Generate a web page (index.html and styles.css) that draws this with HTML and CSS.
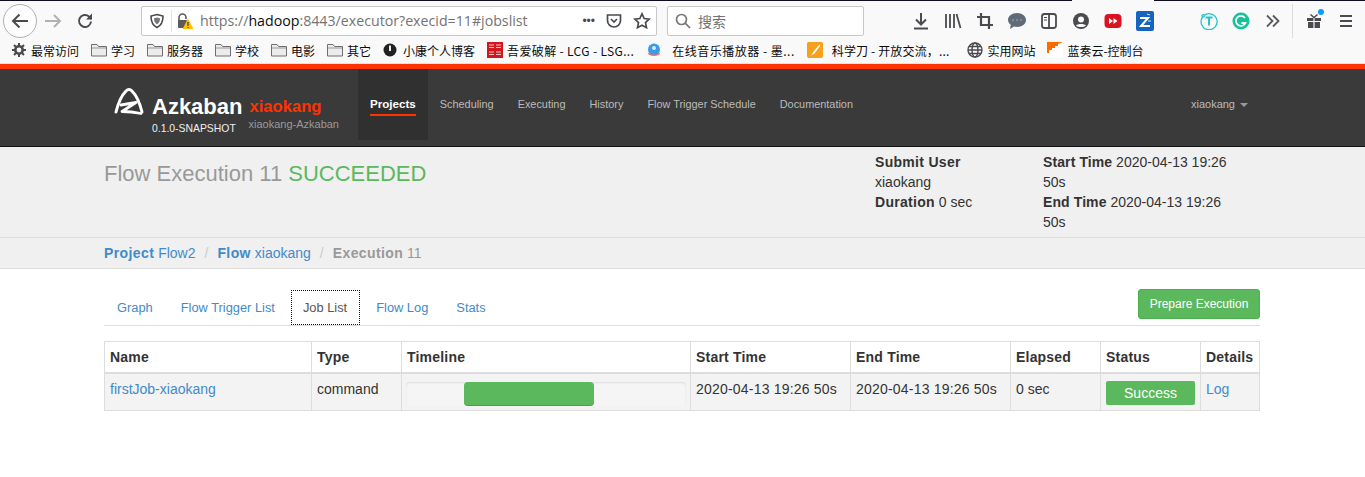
FILE: index.html
```html
<!DOCTYPE html>
<html lang="en">
<head>
    <meta charset="UTF-8">
    <meta name="viewport" content="width=device-width, initial-scale=1.0">
    <title>Azkaban Flow Execution</title>
    <link rel="stylesheet" href="styles.css">
</head>
<body>
    <svg class="sprite" xmlns="http://www.w3.org/2000/svg">
        <symbol id="folder" viewBox="0 0 16 16">
            <path d="M.5 14V2.500h5.500l1.500 2H15.500V14z" fill="#ececec" stroke="#6f6f73"/>
            <path d="M1 6h14" stroke="#98989b"/>
        </symbol>
    </svg>

    <!-- browser chrome -->
    <div class="tabstrip"><span class="strip-dark"></span><span class="strip-gap"></span><span class="strip-end"></span></div>
    <div class="toolbar">
        <button class="back-btn" type="button">
            <svg width="20" height="20" viewBox="0 0 20 20" fill="none" stroke="#4a4a4f" stroke-width="2"><path d="M18 10H3M9.500 3.500L3 10l6.500 6.500"/></svg>
        </button>
        <span class="tool">
            <svg width="18" height="18" viewBox="0 0 18 18" fill="none" stroke="#b1b1b3" stroke-width="2"><path d="M1 9h15M10 3l6 6-6 6"/></svg>
        </span>
        <span class="tool">
            <svg width="18" height="18" viewBox="0 0 18 18" fill="none" stroke="#4a4a4f" stroke-width="2"><path d="M15 9.500A6 6 0 1 1 13 4.500L15.500 7"/><path d="M16 1.500V7.500H10" fill="#4a4a4f" stroke="none"/></svg>
        </span>
        <div class="urlbar">
            <svg class="url-shield" width="16" height="16" viewBox="0 0 16 16"><path d="M8 1.500l6 1.500c0 6-1.500 9.500-6 11.500C3.500 12.500 2 9 2 3z" fill="none" stroke="#4a4a4f" stroke-width="1.600"/><path d="M8 4.500l3 .8c0 3-.8 4.800-3 6-2.200-1.200-3-3-3-6z" fill="#77777b"/></svg>
            <span class="url-sep"></span>
            <svg class="url-lock" width="18" height="18" viewBox="0 0 18 18"><path d="M3 9V5.500a3.500 3.500 0 0 1 7 0V7" fill="none" stroke="#5a5a5e" stroke-width="1.600"/><rect x="2" y="8" width="9" height="8" rx="1" fill="#5a5a5e"/><path d="M12 6.500l5.500 10.500h-11z" fill="#ffbf00"/><path d="M12 10v4M12 15v1" stroke="#3a3a3a" stroke-width="1.200"/></svg>
            <span class="url-text">https://<b>hadoop</b>:8443/executor?execid=11#jobslist</span>
            <span class="url-dots">•••</span>
            <svg width="18" height="18" viewBox="0 0 18 18" fill="none" stroke="#4a4a4f" stroke-width="1.700"><path d="M2.500 3h13v5.500a6.500 6.500 0 0 1-13 0z"/><path d="M6 7l3 3 3-3"/></svg>
            <svg class="url-star" width="18" height="18" viewBox="0 0 18 18" fill="none" stroke="#4a4a4f" stroke-width="1.700"><path d="M9 1.800l2.200 4.700 5 .6-3.700 3.500 1 5.100L9 13.200l-4.500 2.500 1-5.100L1.800 7.100l5-.6z"/></svg>
        </div>
        <div class="searchbar">
            <svg width="16" height="16" viewBox="0 0 16 16" fill="none" stroke="#77777b" stroke-width="1.700"><circle cx="6.500" cy="6.500" r="5"/><path d="M10.200 10.200L15 15"/></svg>
            <span>搜索</span>
        </div>
        <div class="tools">
            <span class="tool"><svg width="18" height="18" viewBox="0 0 18 18" fill="none" stroke="#4a4a4f" stroke-width="2"><path d="M9 1v11M4 7.500l5 5 5-5M2 16.500h14"/></svg></span>
            <span class="tool"><svg width="18" height="18" viewBox="0 0 18 18" fill="none" stroke="#4a4a4f" stroke-width="1.800"><path d="M2 2v14M6 2v14M10 2v14M12.500 2l4 14"/></svg></span>
            <span class="tool"><svg width="16" height="16" viewBox="0 0 16 16" fill="none" stroke="#4a4a4f" stroke-width="2.200"><path d="M4 0v12h12M0 4h12v12"/></svg></span>
            <span class="tool"><svg width="20" height="18" viewBox="0 0 20 18"><path d="M10 1c5 0 9 3 9 7s-4 7-9 7c-1 0-2 0-3-.4L3 17l.8-4.300C2 11.500 1 9.900 1 8c0-4 4-7 9-7z" fill="#5f6b78"/><circle cx="6" cy="8" r="1.200" fill="#7f8a96"/><circle cx="10" cy="8" r="1.200" fill="#7f8a96"/><circle cx="14" cy="8" r="1.200" fill="#7f8a96"/></svg></span>
            <span class="tool"><svg width="18" height="18" viewBox="0 0 18 18" fill="none" stroke="#4a4a4f"><rect x="2" y="2" width="14" height="14" rx="2.500" stroke-width="1.800"/><path d="M9 2v14" stroke-width="1.800"/><path d="M4 5.500h3M4 8h3" stroke-width="1.200"/></svg></span>
            <span class="tool"><svg width="18" height="18" viewBox="0 0 18 18"><circle cx="9" cy="9" r="8" fill="#4a4a4f"/><circle cx="9" cy="7.500" r="3" fill="#f9f9fa"/><path d="M4 13.500c1.500-2 8.500-2 10 0-2 2-8 2-10 0z" fill="#f9f9fa"/></svg></span>
            <span class="tool"><svg width="18" height="16" viewBox="0 0 18 16"><rect x="0.500" y="1" width="17" height="14" rx="4" fill="#d9131f"/><path d="M5 5l4 3-4 3zM9.500 5l4 3-4 3z" fill="#fff"/></svg></span>
            <span class="tool"><svg width="18" height="20" viewBox="0 0 18 20"><rect width="18" height="20" rx="2" fill="#1565c0"/><path d="M4 7h8l-7 8h9" fill="none" stroke="#fff" stroke-width="2"/><path d="M11 3l3 1M12 10h3" stroke="#cfe3fa"/></svg></span>
            <span class="tool-space"></span>
            <span class="tool"><svg width="18" height="18" viewBox="0 0 18 18" fill="none" stroke="#27c4cf" stroke-width="1.300"><path d="M4 3.500A8 8 0 1 1 2.600 5"/><circle cx="3.200" cy="3.800" r="1.200"/><path d="M5.500 5.500h7M9 5.500v8" stroke-width="2"/></svg></span>
            <span class="tool"><svg width="18" height="18" viewBox="0 0 18 18"><circle cx="9" cy="9" r="8.500" fill="#15c39a"/><path d="M13 6a5 5 0 1 0 .5 5H9.500" fill="none" stroke="#fff" stroke-width="1.800"/></svg></span>
            <span class="tool"><svg width="16" height="16" viewBox="0 0 16 16" fill="none" stroke="#5a5a5e" stroke-width="1.800"><path d="M2 2.500L7.500 8 2 13.500M8 2.500L13.500 8 8 13.500"/></svg></span>
            <span class="tool-sep"></span>
            <span class="tool gift"><svg width="16" height="16" viewBox="0 0 16 16"><path d="M1 5h6.400v3H1zM8.600 5H15v3H8.600zM2 9h5.400v6H2zM8.600 9H14v6H8.600z" fill="#4a4a4f"/><path d="M4.500 1.500L8 4.500l3.500-3" fill="none" stroke="#4a4a4f" stroke-width="1.500"/></svg><i class="gift-dot"></i></span>
            <span class="tool"><svg width="14" height="14" viewBox="0 0 14 14" stroke="#4a4a4f" stroke-width="2"><path d="M1 2h12M1 7h12M1 12h12"/></svg></span>
        </div>
    </div>
    <div class="bookmarks">
        <span class="bm"><svg width="16" height="16" viewBox="0 0 16 16"><circle cx="8" cy="8" r="3.800" fill="none" stroke="#4a4a4f" stroke-width="2.400"/><path d="M8 1v14M1 8h14M3 3l10 10M13 3L3 13" stroke="#4a4a4f" stroke-width="2"/><circle cx="8" cy="8" r="2.400" fill="#f9f9fa"/></svg>最常访问</span>
        <span class="bm"><svg width="16" height="16"><use href="#folder"/></svg>学习</span>
        <span class="bm"><svg width="16" height="16"><use href="#folder"/></svg>服务器</span>
        <span class="bm"><svg width="16" height="16"><use href="#folder"/></svg>学校</span>
        <span class="bm"><svg width="16" height="16"><use href="#folder"/></svg>电影</span>
        <span class="bm"><svg width="16" height="16"><use href="#folder"/></svg>其它</span>
        <span class="bm"><svg width="16" height="16" viewBox="0 0 16 16"><circle cx="7" cy="8" r="6.500" fill="#222"/><path d="M6 3.500h2V9H6z" fill="#eee"/></svg>小康个人博客</span>
        <span class="bm bm-latin"><svg width="16" height="16" viewBox="0 0 16 16"><rect width="16" height="16" fill="#d2161e"/><path d="M2 3h5M9 3h5M2 5.500h5M9 5.500h5M2 10h5M9 10h5M2 12.500h5M9 12.500h5" stroke="#f6c6c6" stroke-width="1.200"/></svg>吾爱破解 - LCG - LSG...</span>
        <span class="bm bm-music"><svg width="16" height="16" viewBox="0 0 16 16"><circle cx="8" cy="7.500" r="6" fill="#3b9be8"/><path d="M2.500 11c1.500 3 9.500 3 11 0" fill="none" stroke="#ef6f6f" stroke-width="1.600"/><circle cx="8" cy="6" r="2" fill="#d5ecfb"/></svg>在线音乐播放器 - 墨...</span>
        <span class="bm bm-knife"><svg width="16" height="16" viewBox="0 0 16 16"><rect width="16" height="16" rx="2" fill="#f5a11c"/><path d="M12.500 2.500L7 9l-3 4.500 3.500-2L13 4z" fill="#fff"/></svg>科学刀 - 开放交流，...</span>
        <span class="bm bm-far"><svg width="16" height="16" viewBox="0 0 16 16" fill="none" stroke="#4a4a4f" stroke-width="1.400"><circle cx="8" cy="8" r="7"/><ellipse cx="8" cy="8" rx="3" ry="7"/><path d="M1 8h14M2 4.500h12M2 11.500h12"/></svg>实用网站</span>
        <span class="bm"><svg width="16" height="16" viewBox="0 0 16 16"><rect width="16" height="16" fill="#fff"/><path d="M0 0h16L11 2v2H8v2H5v2H2v3H0z" fill="#ff6a00"/></svg>蓝奏云-控制台</span>
    </div>

    <!-- azkaban page -->
    <nav class="navbar">
        <div class="brand">
            <svg class="logo" width="34" height="32" viewBox="0 0 34 32" fill="none" stroke="#fff" stroke-linecap="round" stroke-linejoin="round">
                <path d="M3 25C5 17 9 8 13 4c2-2 4-2 6 0 4 4 8 13 10 21" stroke-width="3"/>
                <path d="M8 18l15-2.500L9 24.500c6 0 12 .5 19 2" stroke-width="2.800"/>
            </svg>
            <div class="brand-name">
                <span class="brand-title">Azkaban</span>
                <span class="brand-version">0.1.0-SNAPSHOT</span>
            </div>
            <div class="brand-env">
                <span class="env-name">xiaokang</span>
                <span class="env-desc">xiaokang-Azkaban</span>
            </div>
        </div>
        <ul class="nav-links">
            <li class="active"><a href="#">Projects</a></li>
            <li><a href="#">Scheduling</a></li>
            <li><a href="#">Executing</a></li>
            <li><a href="#">History</a></li>
            <li><a href="#">Flow Trigger Schedule</a></li>
            <li><a href="#">Documentation</a></li>
        </ul>
        <div class="nav-user">xiaokang<i class="caret"></i></div>
    </nav>

    <div class="flow-header">
        <h1 class="flow-title">Flow Execution 11 <span class="succeeded">SUCCEEDED</span></h1>
        <div class="flow-meta">
            <p><b>Submit User</b><br>xiaokang<br><b>Duration</b> 0 sec</p>
            <p class="meta-times"><b>Start Time</b> 2020-04-13 19:26<br>50s<br><b>End Time</b> 2020-04-13 19:26<br>50s</p>
        </div>
    </div>

    <div class="crumbs">
        <a href="#"><b>Project</b> Flow2</a>
        <span class="crumb-sep">/</span>
        <a href="#"><b>Flow</b> xiaokang</a>
        <span class="crumb-sep">/</span>
        <span class="crumb-now"><b>Execution</b> 11</span>
    </div>

    <div class="content">
        <div class="tabs">
            <a class="tab" href="#">Graph</a>
            <a class="tab" href="#">Flow Trigger List</a>
            <a class="tab tab-active" href="#">Job List</a>
            <a class="tab" href="#">Flow Log</a>
            <a class="tab" href="#">Stats</a>
            <button class="btn-prepare" type="button">Prepare Execution</button>
        </div>

        <table class="jobs">
            <colgroup>
                <col class="c-name"><col class="c-type"><col class="c-line"><col class="c-time"><col class="c-time"><col class="c-elapsed"><col class="c-status"><col class="c-details">
            </colgroup>
            <thead>
                <tr>
                    <th>Name</th><th>Type</th><th>Timeline</th><th>Start Time</th><th>End Time</th><th>Elapsed</th><th>Status</th><th>Details</th>
                </tr>
            </thead>
            <tbody>
                <tr>
                    <td><a href="#">firstJob-xiaokang</a></td>
                    <td>command</td>
                    <td class="cell-line"><div class="progress"><div class="progress-bar" style="margin-left: 58px; width: 130px;"></div></div></td>
                    <td class="cell-time">2020-04-13 19:26 50s</td>
                    <td class="cell-time">2020-04-13 19:26 50s</td>
                    <td>0 sec</td>
                    <td class="cell-status"><div class="status-ok">Success</div></td>
                    <td><a href="#">Log</a></td>
                </tr>
            </tbody>
        </table>
    </div>
</body>
</html>
```

FILE: styles.css
```css
body {
    margin: 0;
    background-color: #ffffff;
    color: #333333;
    font-family: "Liberation Sans", Arial, sans-serif;
    font-size: 14px;
    overflow: hidden;
}
a {
    color: #428bca;
    text-decoration: none;
}
.sprite {
    display: none;
}

/* browser chrome */
.tabstrip {
    display: flex;
    height: 1px;
}
.strip-dark {
    flex: 1;
    background-color: #0d0d22;
}
.strip-gap {
    width: 82px;
    background-color: #f9f9fa;
}
.strip-end {
    width: 211px;
    background-color: #0d0d22;
}
.toolbar {
    display: flex;
    align-items: center;
    height: 40px;
    background-color: #f9f9fa;
}
.back-btn {
    display: flex;
    align-items: center;
    justify-content: center;
    width: 34px;
    height: 34px;
    margin: 0 0 0 3px;
    padding: 0;
    background-color: #fdfdfd;
    border: 1px solid #b1b1b3;
    border-radius: 50%;
}
.tool {
    position: relative;
    display: flex;
    align-items: center;
    justify-content: center;
    width: 32px;
    height: 32px;
}
.urlbar {
    display: flex;
    align-items: center;
    box-sizing: border-box;
    width: 516px;
    height: 30px;
    margin-left: 40px;
    padding: 0 5px 0 6px;
    background-color: #ffffff;
    border: 1px solid #c8c8c9;
    border-radius: 2px;
}
.url-shield {
    margin-left: 1px;
}
.url-sep {
    width: 1px;
    height: 22px;
    margin: 0 4px 0 6px;
    background-color: #e3e3e4;
}
.url-lock {
    margin-right: 6px;
}
.url-text {
    flex: 1;
    margin-top: -2px;
    color: #737373;
    font-family: "Open Sans", sans-serif;
    font-size: 14.2px;
    white-space: nowrap;
}
.url-text b {
    color: #0c0c0d;
    font-weight: 400;
}
.url-dots {
    margin-right: 10px;
    color: #4a4a4f;
    font-size: 12px;
}
.url-star {
    margin-left: 10px;
}
.searchbar {
    display: flex;
    align-items: center;
    gap: 7px;
    box-sizing: border-box;
    width: 197px;
    height: 30px;
    margin-left: 10px;
    padding-left: 7px;
    color: #737373;
    background-color: #ffffff;
    border: 1px solid #c8c8c9;
    border-radius: 2px;
    font-family: "Noto Sans CJK SC", sans-serif;
    font-size: 14px;
}
.tools {
    display: flex;
    align-items: center;
    margin-left: 41px;
}
.tool-space {
    width: 32px;
}
.tool-sep {
    width: 1px;
    height: 34px;
    margin: 0 5px 0 3px;
    background-color: #dcdcdd;
}
.gift-dot {
    position: absolute;
    top: 4px;
    right: 6px;
    width: 6px;
    height: 6px;
    background-color: #0a9dff;
    border-radius: 50%;
}
.bookmarks {
    display: flex;
    align-items: center;
    gap: 12px;
    box-sizing: border-box;
    height: 23px;
    padding: 0 0 4px 11px;
    background-color: #f9f9fa;
    border-bottom: 1px solid #e4e4e4;
    color: #0c0c0d;
    font-family: "Noto Sans CJK SC", sans-serif;
    font-size: 12px;
    white-space: nowrap;
}
.bm {
    display: flex;
    align-items: center;
    gap: 4px;
}
.bm-latin {
    letter-spacing: 0.35px;
}
.bm-music {
    gap: 10px;
    letter-spacing: 0.5px;
}
.bm-knife {
    gap: 9px;
    letter-spacing: 0.15px;
}
.bm-far {
    margin-left: 6px;
}

/* navbar */
.navbar {
    display: flex;
    box-sizing: border-box;
    height: 83px;
    padding-left: 113px;
    background-color: #3a3a3a;
    border-top: 5px solid #ff3300;
    border-bottom: 1px solid #111111;
}
.brand {
    display: flex;
    width: 245px;
}
.logo {
    margin-top: 18px;
    margin-right: 5px;
}
.brand-name {
    display: flex;
    flex-direction: column;
    padding-top: 24px;
    margin-right: 7px;
}
.brand-title {
    color: #ffffff;
    font-size: 22px;
    font-weight: bold;
    line-height: 28px;
}
.brand-version {
    margin-top: 1px;
    color: #f0f0f0;
    font-size: 10.4px;
    line-height: 13px;
}
.brand-env {
    display: flex;
    flex-direction: column;
    padding-top: 27px;
}
.env-name {
    color: #ff3300;
    font-size: 16.6px;
    font-weight: bold;
    line-height: 22px;
}
.env-desc {
    margin-left: -1px;
    color: #999999;
    font-size: 11px;
    line-height: 13px;
}
.nav-links {
    display: flex;
    align-items: flex-start;
    margin: 0;
    padding: 0;
    list-style: none;
    font-size: 10.9px;
}
.nav-links li {
    box-sizing: border-box;
    height: 71px;
    padding: 28px 12px 0;
}
.nav-links a {
    display: block;
    padding-bottom: 3px;
    color: #bbbbbb;
    line-height: 14px;
}
.nav-links .active {
    background-color: #303030;
}
.nav-links .active a {
    color: #ffffff;
    font-size: 11.6px;
    font-weight: bold;
    border-bottom: 2px solid #ff3300;
}
.nav-user {
    margin-left: auto;
    margin-right: 117px;
    padding-top: 28px;
    color: #bbbbbb;
    font-size: 11px;
    line-height: 14px;
}
.caret {
    display: inline-block;
    margin-left: 5px;
    vertical-align: middle;
    border-top: 4px solid #999999;
    border-right: 4px solid transparent;
    border-left: 4px solid transparent;
}

/* header */
.flow-header {
    display: flex;
    box-sizing: border-box;
    height: 91px;
    padding-left: 104px;
    background-color: #f0f0f0;
    border-bottom: 1px solid #dddddd;
}
.flow-title {
    width: 771px;
    margin: 13px 0 0;
    color: #999999;
    font-size: 22px;
    font-weight: 400;
    line-height: 27px;
}
.succeeded {
    color: #5cb85c;
}
.flow-meta {
    display: flex;
    padding-top: 5px;
    line-height: 20px;
}
.flow-meta b {
    letter-spacing: 0.3px;
}
.flow-meta p {
    width: 168px;
    margin: 0;
}
.flow-meta .meta-times {
    width: 200px;
}
.flow-meta .meta-times b {
    letter-spacing: 0.1px;
}

/* breadcrumb */
.crumbs {
    display: flex;
    gap: 9px;
    box-sizing: border-box;
    height: 31px;
    padding: 5px 0 0 104px;
    background-color: #f0f0f0;
    border-bottom: 1px solid #dddddd;
    line-height: 20px;
}
.crumbs b {
    letter-spacing: 0.4px;
}
.crumb-sep {
    color: #cccccc;
}
.crumb-now {
    color: #999999;
}

/* tabs and table */
.content {
    width: 1156px;
    margin-left: 104px;
}
.tabs {
    display: flex;
    align-items: flex-end;
    height: 35px;
    margin-top: 21px;
    border-bottom: 1px solid #dddddd;
    font-size: 12.85px;
}
.tab {
    box-sizing: border-box;
    height: 35px;
    margin-right: 2px;
    padding: 10px 13px 0;
    line-height: 16px;
}
.tab-active {
    margin-right: 3px;
    margin-left: 1px;
    padding: 9px 12px 0 11px;
    color: #555555;
    border: 1px dotted #111111;
    background-color: #ffffff;
}
.btn-prepare {
    align-self: flex-start;
    width: 122px;
    height: 30px;
    margin-top: -1px;
    margin-left: auto;
    padding: 0;
    color: #ffffff;
    background-color: #5cb85c;
    border: 1px solid #4cae4c;
    border-radius: 3px;
    font-family: "Liberation Sans", Arial, sans-serif;
    font-size: 12px;
}
.jobs {
    width: 1155px;
    margin-top: 15px;
    table-layout: fixed;
    border-collapse: collapse;
    border: 1px solid #dddddd;
}
.c-name { width: 207px; }
.c-type { width: 90px; }
.c-line { width: 289px; }
.c-time { width: 160px; }
.c-elapsed { width: 90px; }
.c-status { width: 100px; }
.c-details { width: 59px; }
.jobs th,
.jobs td {
    padding: 5px;
    border: 1px solid #dddddd;
    text-align: left;
    vertical-align: top;
    line-height: 20px;
}
.jobs th {
    border-bottom: 2px solid #dddddd;
    letter-spacing: 0.2px;
}
.jobs td {
    background-color: #f3f3f3;
    white-space: nowrap;
}
.jobs .cell-time {
    letter-spacing: 0.2px;
}
.jobs .cell-line {
    padding: 8px 4px 4px;
}
.progress {
    height: 24px;
    background-color: #f5f5f5;
    border-radius: 4px;
    box-shadow: inset 0 1px 2px rgba(0, 0, 0, 0.1);
}
.progress-bar {
    height: 24px;
    background-color: #5cb85c;
    border-radius: 4px;
    box-shadow: inset 0 -1px 0 rgba(0, 0, 0, 0.15);
}
.jobs .cell-status {
    padding: 7px 5px 4px;
}
.status-ok {
    height: 24px;
    color: #ffffff;
    background-color: #5cb85c;
    border-radius: 2px;
    text-align: center;
    line-height: 25px;
}
```
